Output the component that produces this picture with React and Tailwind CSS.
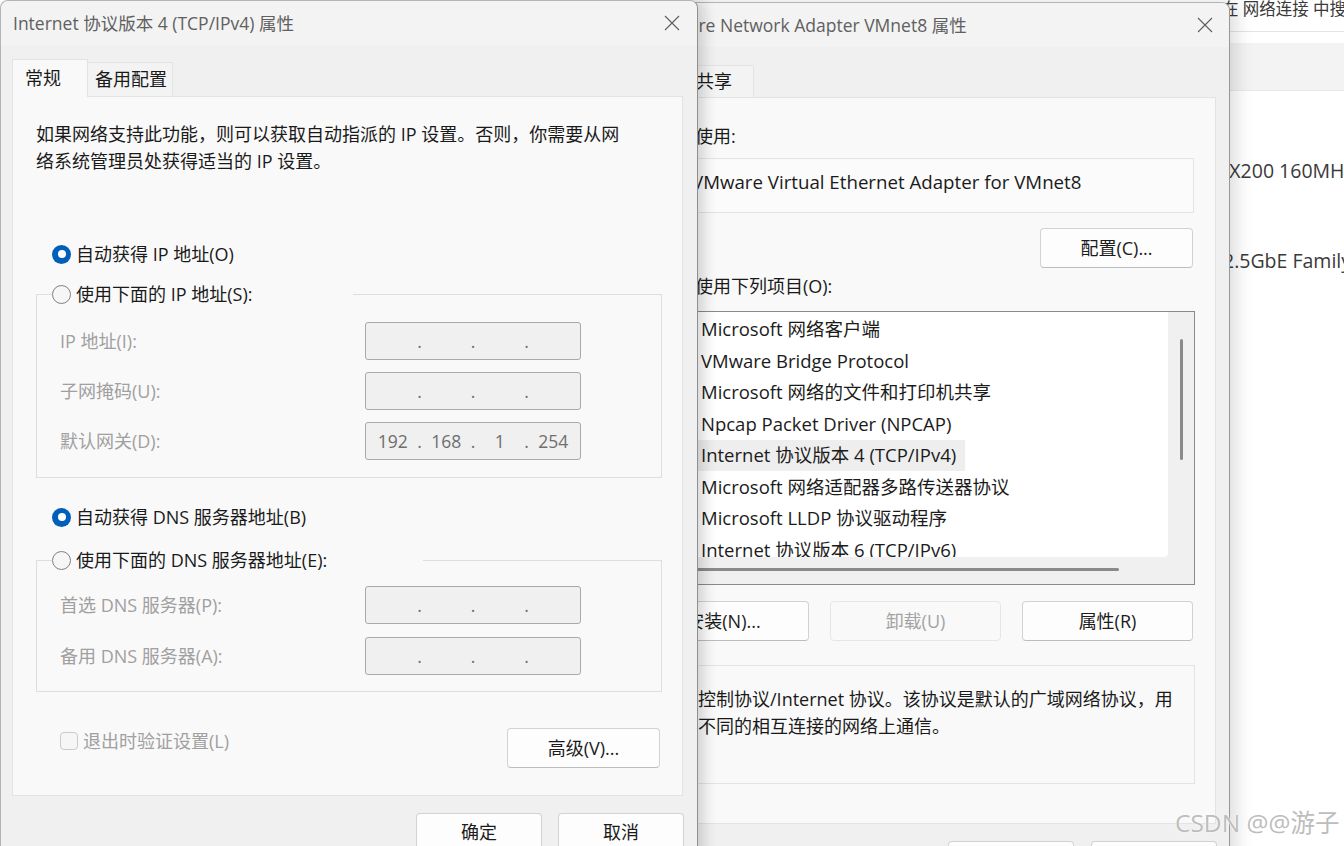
import React from 'react';

const items = [
  'Microsoft 网络客户端',
  'VMware Bridge Protocol',
  'Microsoft 网络的文件和打印机共享',
  'Npcap Packet Driver (NPCAP)',
  'Internet 协议版本 4 (TCP/IPv4)',
  'Microsoft 网络适配器多路传送器协议',
  'Microsoft LLDP 协议驱动程序',
  'Internet 协议版本 6 (TCP/IPv6)',
];

const CloseX = () => (
  <svg width="16" height="16" viewBox="0 0 16 16" fill="none">
    <path d="M1 1L15 15M15 1L1 15" stroke="#5e5e5e" strokeWidth="1.1" />
  </svg>
);

const Radio = ({ checked }) =>
  checked ? (
    <span className="flex h-[19px] w-[19px] shrink-0 items-center justify-center rounded-full bg-[#005fb8]">
      <span className="h-[8px] w-[8px] rounded-full bg-white" />
    </span>
  ) : (
    <span className="h-[19px] w-[19px] shrink-0 rounded-full border-[1.5px] border-[#808080] bg-[#f6f6f6]" />
  );

const Button = ({ children, className = '', disabled }) => (
  <div
    className={`flex items-center justify-center rounded-[4px] border ${
      disabled
        ? 'border-[#e6e6e6] bg-[#f9f9f9] text-[#a3a3a3]'
        : 'border-[#d2d2d2] border-b-[#bdbdbd] bg-[#fdfdfd] text-[#1b1b1b]'
    } ${className}`}
  >
    {children}
  </div>
);

const IpBox = ({ parts = ['', '', '', ''] }) => (
  <div className="flex h-[38px] w-[216px] items-center rounded-[3px] border border-[#a9a9a9] bg-[#f0f0f0] text-[17.5px] text-[#6e6e6e]">
    {parts.map((p, i) => (
      <React.Fragment key={i}>
        <span className="flex-1 text-center">{p}</span>
        {i < 3 && <span className="flex w-0 justify-center">.</span>}
      </React.Fragment>
    ))}
  </div>
);

const Field = ({ label, parts }) => (
  <div className="flex h-[38px] items-center">
    <span className="w-[305px] text-[#a0a0a0]">{label}</span>
    <IpBox parts={parts} />
  </div>
);

// groupbox whose caption is a radio button sitting on the top border
const Group = ({ label, legendW, className = '', children }) => (
  <fieldset className={`ml-[23px] w-[626px] border border-[#dedede] ${className}`}>
    <legend className={`ml-[15px] ${legendW}`}>
      <div className="flex h-[30px] items-center gap-[5px]">
        <Radio />
        <span>{label}</span>
      </div>
    </legend>
    {children}
  </fieldset>
);

const TcpDialog = () => (
  <div className="absolute left-0 top-0 z-20 flex h-[880px] w-[698px] flex-col rounded-t-[8px] border border-[#b4b4b4] border-r-[#8f8f8f] bg-[#f0f0f0] shadow-[6px_0_14px_rgba(0,0,0,0.16)]">
    <div className="flex h-[44px] items-center justify-between rounded-t-[8px] bg-[#f3f3f3] pl-[12px] pr-[17px]">
      <span className="text-[17.5px] text-[#606060]">Internet 协议版本 4 (TCP/IPv4) 属性</span>
      <CloseX />
    </div>

    {/* tabs */}
    <div className="relative z-10 -mb-px ml-[11px] mt-[14px] flex h-[38px] items-end">
      <div className="flex h-[38px] w-[76px] items-center border border-b-0 border-[#e3e3e3] bg-[#f9f9f9] pl-[12px]">
        常规
      </div>
      <div className="flex h-[35px] w-[85px] items-center border border-l-0 border-[#e3e3e3] bg-[#f3f3f3] pl-[7px]">
        备用配置
      </div>
    </div>

    <div className="ml-[11px] h-[700px] w-[671px] border border-[#e3e3e3] bg-[#f9f9f9]">
      <div className="whitespace-nowrap pl-[23px] pt-[24px] leading-[27px]">
        如果网络支持此功能，则可以获取自动指派的 IP 设置。否则，你需要从网
        <br />
        络系统管理员处获得适当的 IP 设置。
      </div>

      <div className="ml-[39px] mt-[64px] flex h-[30px] items-center gap-[5px]">
        <Radio checked />
        <span>自动获得 IP 地址(O)</span>
      </div>
      <Group label="使用下面的 IP 地址(S):" legendW="w-[301px]" className="mt-[10px] pb-[17px]">
        <div className="flex flex-col gap-[12px] pl-[23px] pt-[13px]">
          <Field label="IP 地址(I):" />
          <Field label="子网掩码(U):" />
          <Field label="默认网关(D):" parts={['192', '168', '1', '254']} />
        </div>
      </Group>

      <div className="ml-[39px] mt-[24px] flex h-[30px] items-center gap-[5px]">
        <Radio checked />
        <span>自动获得 DNS 服务器地址(B)</span>
      </div>
      <Group label="使用下面的 DNS 服务器地址(E):" legendW="w-[371px]" className="mt-[13px] pb-[16px]">
        <div className="flex flex-col gap-[13px] pl-[23px] pt-[11px]">
          <Field label="首选 DNS 服务器(P):" />
          <Field label="备用 DNS 服务器(A):" />
        </div>
      </Group>

      <div className="mt-[36px] flex items-start justify-between pl-[47px] pr-[22px]">
        <div className="flex h-[26px] items-center gap-[5px] text-[#a0a0a0]">
          <span className="h-[18px] w-[18px] rounded-[4px] border border-[#cacaca] bg-[#f6f6f6]" />
          <span>退出时验证设置(L)</span>
        </div>
        <Button className="h-[40px] w-[153px]">高级(V)...</Button>
      </div>
    </div>

    <div className="mt-[17px] flex justify-end gap-[16px] pr-[13px]">
      <Button className="h-[38px] w-[126px]">确定</Button>
      <Button className="h-[38px] w-[126px]">取消</Button>
    </div>
  </div>
);

const AdapterDialog = () => (
  <div className="absolute left-[622px] top-[2px] z-10 flex h-[880px] w-[608px] flex-col rounded-t-[8px] border border-[#b4b4b4] border-r-[#979797] bg-[#f0f0f0] shadow-[6px_0_18px_rgba(0,0,0,0.14)]">
    <div className="flex h-[44px] items-center justify-between rounded-t-[8px] bg-[#f3f3f3] pl-[26px] pr-[16px]">
      <span className="text-[17.5px] text-[#606060]">VMware Network Adapter VMnet8 属性</span>
      <CloseX />
    </div>

    <div className="relative z-10 -mb-px ml-[11px] mt-[15px] flex h-[36px] items-end">
      <div className="flex h-[36px] w-[46px] items-center border border-b-0 border-[#e3e3e3] bg-[#f9f9f9] pl-[8px]">
        网络
      </div>
      <div className="flex h-[33px] w-[74px] items-center border border-l-0 border-[#e3e3e3] bg-[#f3f3f3] pl-[16px]">
        共享
      </div>
    </div>

    <div className="ml-[11px] h-[727px] w-[582px] border border-[#e3e3e3] bg-[#f9f9f9]">
      <div className="pl-[6px] pt-[25px] leading-[26px]">连接时使用:</div>
      <div className="ml-[6px] mt-[9px] flex h-[55px] w-[553px] items-center border border-[#e3e3e3] bg-[#fbfbfb] pb-[7px] pl-[50px] text-[18.7px]">
        VMware Virtual Ethernet Adapter for VMnet8
      </div>
      <div className="mt-[15px] flex justify-end pr-[22px]">
        <Button className="h-[40px] w-[153px]">配置(C)...</Button>
      </div>
      <div className="mt-[5px] pl-[6px] leading-[26px]">此连接使用下列项目(O):</div>

      {/* component list */}
      <div className="ml-[6px] mt-[12px] flex h-[274px] w-[554px] flex-col border border-[#878a90] bg-[#f0f0f0]">
        <div className="flex h-[245px]">
          <div className="w-[526px] overflow-hidden rounded-br-[4px] bg-white pt-[1.5px] text-[18.5px] text-[#1b1b1b]">
            {items.map((t, i) => (
              <div key={t} className="flex h-[31.5px]">
                <div className={`flex h-full items-center pl-[6px] pr-[9px] ${i === 4 ? 'bg-[#eeeeee]' : ''}`}>
                  <span className="h-[18px] w-[18px] rounded-[4px] bg-[#005fb8]" />
                  <span className="ml-[8px] h-[18px] w-[20px] bg-[#6a8fc4]" />
                  <span className="ml-[7px] whitespace-nowrap">{t}</span>
                </div>
              </div>
            ))}
          </div>
          <div className="flex w-[26px] flex-col items-center">
            <span className="mt-[27px] h-[121px] w-[3px] rounded-full bg-[#8a8a8a]" />
          </div>
        </div>
        <div className="h-[27px] pt-[11px]">
          <div className="h-[3px] w-[477px] rounded-full bg-[#8a8a8a]" />
        </div>
      </div>

      <div className="mt-[16px] flex justify-end gap-[21px] pr-[22px]">
        <Button className="h-[40px] w-[171px]">安装(N)...</Button>
        <Button className="h-[40px] w-[171px]" disabled>
          卸载(U)
        </Button>
        <Button className="h-[40px] w-[171px]">属性(R)</Button>
      </div>

      <div className="ml-[6px] mt-[24px] h-[119px] w-[554px] whitespace-nowrap border border-[#e3e3e3] pl-[20px] pt-[20px] leading-[27px]">
        传输控制协议/Internet 协议。该协议是默认的广域网络协议，用
        <br />
        于在不同的相互连接的网络上通信。
      </div>
    </div>

    <div className="mt-[17px] flex justify-end gap-[17px] pr-[12px]">
      <Button className="h-[38px] w-[126px]">确定</Button>
      <Button className="h-[38px] w-[126px]">取消</Button>
    </div>
  </div>
);

export default function App() {
  return (
    <div className="relative h-[846px] w-[1344px] overflow-hidden bg-white font-['Open_Sans','Noto_Sans_CJK_SC',sans-serif] text-[18px] text-[#1a1a1a]">
      {/* network connections window behind the dialogs */}
      <div className="h-full w-full text-[#3a3a3a]">
        <div className="h-[34px] border-b border-[#e3e3e3] pl-[1222px]">
          <div className="-mt-[2px] whitespace-nowrap text-[16.5px] leading-[22px]">在 网络连接 中搜索</div>
        </div>
        <div className="mt-[11px] h-[48px] border-b border-[#e8e8e8] bg-[#f3f3f3]" />
        <div className="whitespace-nowrap text-[19.5px] leading-[26px]">
          <div className="ml-[1217px] mt-[67px]">AX200 160MHz</div>
          <div className="ml-[1223px] mt-[64px]">2.5GbE Family Controller</div>
        </div>
      </div>

      <AdapterDialog />
      <TcpDialog />

      <div className="absolute left-[1175px] top-[808px] z-30 whitespace-nowrap text-[24.5px] leading-[30px] text-[#bdbdbd] [text-shadow:0_0_2px_#fff,0_0_1px_#fff]">
        CSDN @@游子
      </div>
    </div>
  );
}
